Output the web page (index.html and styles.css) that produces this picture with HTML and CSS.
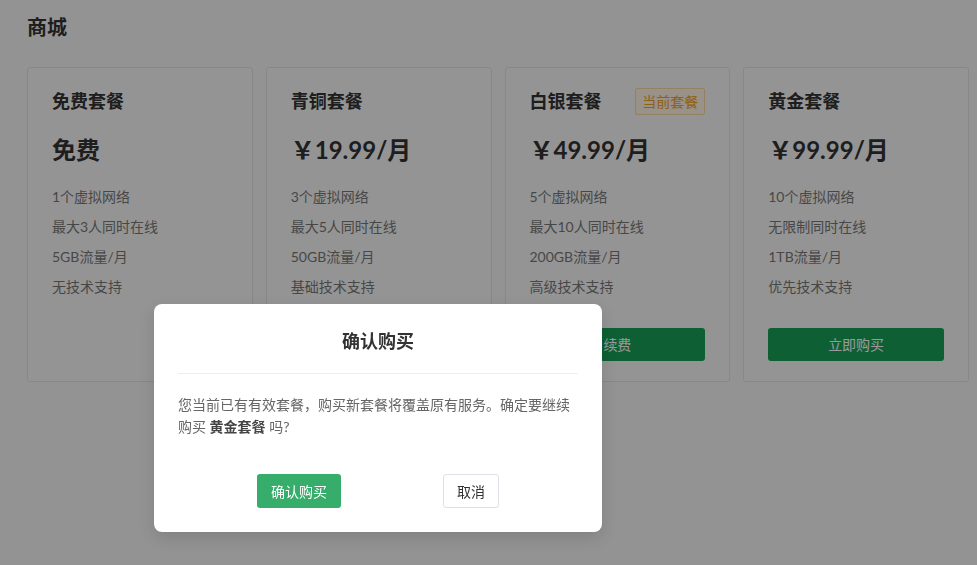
FILE: index.html
```html
<!DOCTYPE html>
<html lang="zh-CN">
<head>
<meta charset="utf-8">
<title>商城</title>
<link rel="stylesheet" href="styles.css">
</head>
<body>
<div class="page">
  <h1 class="page-title">商城</h1>
  <div class="plans">
    <div class="card">
      <div class="card-head"><span class="card-title">免费套餐</span></div>
      <div class="price">免费</div>
      <ul class="features">
        <li>1个虚拟网络</li>
        <li>最大3人同时在线</li>
        <li>5GB流量/月</li>
        <li>无技术支持</li>
      </ul>
    </div>
    <div class="card">
      <div class="card-head"><span class="card-title">青铜套餐</span></div>
      <div class="price">￥19.99/月</div>
      <ul class="features">
        <li>3个虚拟网络</li>
        <li>最大5人同时在线</li>
        <li>50GB流量/月</li>
        <li>基础技术支持</li>
      </ul>
      <button class="buy">立即购买</button>
    </div>
    <div class="card">
      <div class="card-head"><span class="card-title">白银套餐</span><span class="tag">当前套餐</span></div>
      <div class="price">￥49.99/月</div>
      <ul class="features">
        <li>5个虚拟网络</li>
        <li>最大10人同时在线</li>
        <li>200GB流量/月</li>
        <li>高级技术支持</li>
      </ul>
      <button class="buy">续费</button>
    </div>
    <div class="card">
      <div class="card-head"><span class="card-title">黄金套餐</span></div>
      <div class="price">￥99.99/月</div>
      <ul class="features">
        <li>10个虚拟网络</li>
        <li>无限制同时在线</li>
        <li>1TB流量/月</li>
        <li>优先技术支持</li>
      </ul>
      <button class="buy">立即购买</button>
    </div>
  </div>
</div>
<div class="mask"></div>
<div class="modal">
  <div class="modal-title">确认购买</div>
  <p class="modal-text">您当前已有有效套餐，购买新套餐将覆盖原有服务。确定要继续购买 <strong>黄金套餐</strong> 吗?</p>
  <div class="modal-actions">
    <button class="btn-confirm">确认购买</button>
    <button class="btn-cancel">取消</button>
  </div>
</div>
</body>
</html>
```
FILE: styles.css
```css
* { box-sizing: border-box; }
html, body { margin: 0; height: 100%; }
body {
  background: #f5f5f5;
  font-family: "Lato", "Noto Sans CJK SC", sans-serif;
  color: #333;
  overflow: hidden;
}
.page { padding: 13px 27px; }
.page-title {
  margin: 0 0 26px;
  font-size: 20px;
  line-height: 28px;
  font-weight: 700;
  color: #333;
}
.plans {
  width: 942px;
  display: grid;
  grid-template-columns: repeat(4, 1fr);
  gap: 13px;
}
.card {
  background: #f7f7f7;
  border: 1px solid #e2e2e2;
  border-radius: 3px;
  padding: 20px 24px 20px 24px;
  display: flex;
  flex-direction: column;
  min-height: 315px;
}
.card-head {
  display: flex;
  justify-content: space-between;
  align-items: center;
  height: 26px;
}
.card-title {
  font-size: 18px;
  line-height: 26px;
  font-weight: 700;
  color: #333;
}
.tag {
  font-size: 14px;
  line-height: 25px;
  padding: 0 6px;
  color: #f0a020;
  background: #fdf3e3;
  border: 1px solid #f7d79e;
  border-radius: 2px;
}
.price {
  margin-top: 20px;
  font-size: 24px;
  line-height: 32px;
  font-weight: 700;
  color: #333;
}
.features {
  list-style: none;
  margin: 16px 0 0;
  padding: 0;
}
.features li {
  font-size: 14px;
  line-height: 30px;
  color: #777;
}
.buy {
  margin-top: 26px;
  height: 33px;
  padding: 0 0 2px;
  border: none;
  border-radius: 3px;
  background: #18a058;
  color: #fff;
  font-family: inherit;
  font-size: 14px;
}
.mask {
  position: fixed;
  inset: 0;
  background: rgba(0, 0, 0, 0.4);
}
.modal {
  position: absolute;
  left: 154px;
  top: 304px;
  width: 448px;
  background: #fff;
  border-radius: 8px;
  padding: 24px;
  box-shadow: 0 6px 16px rgba(0, 0, 0, 0.12);
}
.modal-title {
  text-align: center;
  font-size: 18px;
  line-height: 26px;
  font-weight: 700;
  color: #333;
  padding-bottom: 19px;
  border-bottom: 1px solid #eee;
}
.modal-text {
  margin: 20px 0 0;
  font-size: 14px;
  line-height: 22px;
  color: #666;
}
.modal-text strong { color: #444; font-weight: 700; }
.modal-actions {
  margin-top: 36px;
  display: flex;
  justify-content: center;
  gap: 102px;
}
.btn-confirm, .btn-cancel {
  height: 34px;
  border-radius: 3px;
  font-family: inherit;
  font-size: 14px;
}
.btn-confirm {
  width: 84px;
  border: none;
  background: #36ad6a;
  color: #fff;
}
.btn-cancel {
  width: 56px;
  border: 1px solid #e0e0e6;
  background: #fff;
  color: #333;
}
```
